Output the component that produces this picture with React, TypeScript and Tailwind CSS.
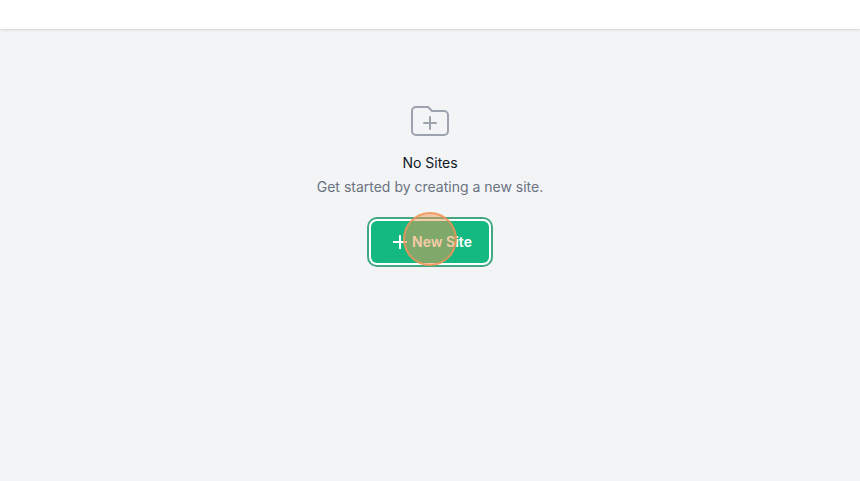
function FolderPlusIcon() {
  return (
    <svg
      className="h-12 w-12 text-[#9ca3af]"
      fill="none"
      viewBox="0 0 24 24"
      stroke="currentColor"
      aria-hidden="true"
    >
      <path
        vectorEffect="non-scaling-stroke"
        strokeLinecap="round"
        strokeLinejoin="round"
        strokeWidth={2}
        d="M9 13h6m-3-3v6m-9 1V7a2 2 0 012-2h6l2 2h6a2 2 0 012 2v8a2 2 0 01-2 2H5a2 2 0 01-2-2z"
      />
    </svg>
  );
}

function PlusIcon() {
  return (
    <svg
      className="mr-0.5 h-5 w-5"
      viewBox="0 0 20 20"
      fill="none"
      stroke="currentColor"
      strokeWidth={2}
      aria-hidden="true"
    >
      <path d="M10 3v14M3 10h14" />
    </svg>
  );
}

function EmptyState() {
  return (
    <div className="flex flex-col items-center px-4 pt-[68px] text-center">
      <FolderPlusIcon />
      <h3 className="mt-2 text-sm leading-5 text-[#111827]">No Sites</h3>
      <p className="mt-1 text-sm leading-5 text-[#6b7280]">
        Get started by creating a new site.
      </p>
      <div className="relative mt-6">
        <button
          type="button"
          className="flex h-[42px] items-center rounded-md bg-[#13b981] pr-[17px] pl-[19px] text-sm font-semibold text-white ring-2 ring-[#42a883] ring-offset-2"
        >
          <PlusIcon />
          New Site
        </button>
        {/* click highlight */}
        <span className="pointer-events-none absolute -top-[9px] left-8 h-[54px] w-[54px] rounded-full border-2 border-[#f39458]/80 bg-[#ee9753]/50" />
      </div>
    </div>
  );
}

function App() {
  return (
    <div className="min-h-screen bg-[#f2f4f6] font-['Inter',sans-serif]">
      <header className="h-[29px] bg-white shadow" />
      <main>
        <EmptyState />
      </main>
    </div>
  );
}

export default App;
